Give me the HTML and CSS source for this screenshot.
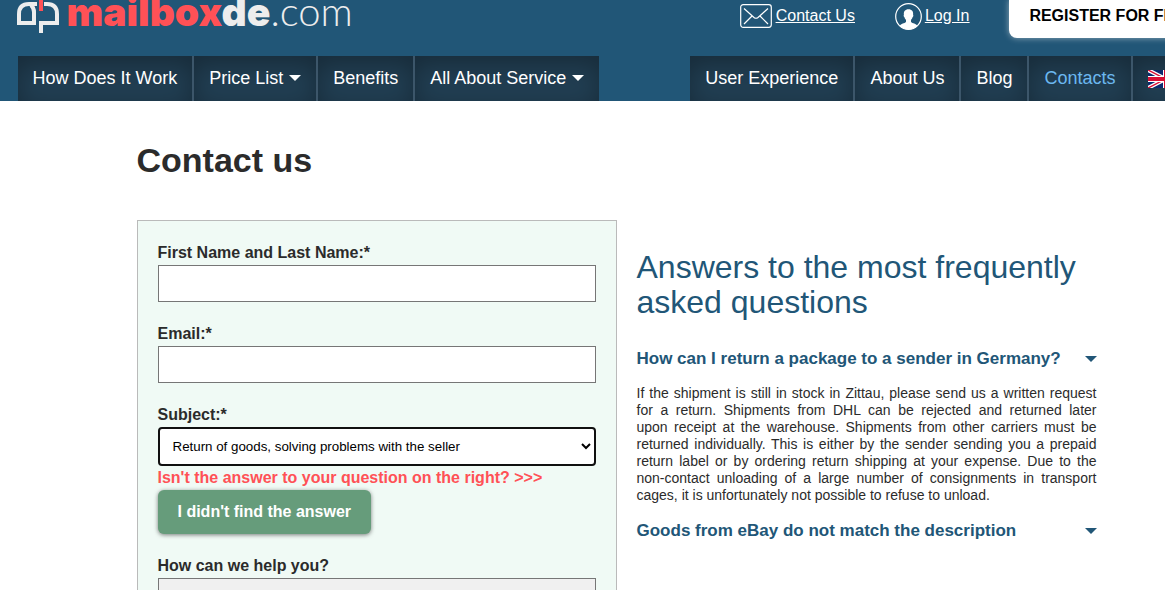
FILE: index.html
```html
<!DOCTYPE html>
<html lang="en">
<head>
<meta charset="utf-8">
<title>Contact us - mailboxde.com</title>
<link rel="stylesheet" href="styles.css">
</head>
<body>
<div class="page">
  <header class="header">
    <div class="wrap topbar">
      <a class="logo" href="#">
        <svg class="logo-mark" width="44" height="34" viewBox="0 0 44 34" aria-hidden="true">
          <g fill="none" stroke="#ededed" stroke-width="4">
            <path d="M21 4H13Q3 4 3 14V23H18V12Q18 8 15 5"/>
            <path d="M28 4H31Q41 4 41 14V23H25V33"/>
          </g>
          <path d="M23 0h4v11h-4z" fill="#ff5156"/>
        </svg>
        <span class="logo-text"><b class="logo-red">mailbox</b><b>de</b><span class="logo-thin">.com</span></span>
      </a>
      <a class="top-link" href="#">
        <svg width="32" height="24" viewBox="0 0 32 24" fill="none" stroke="#fff" aria-hidden="true">
          <rect x=".7" y=".7" width="30.600" height="22.600" rx="2.500" stroke-width="1.200"/>
          <path d="M4 4.500L14 13.500Q16 15 18 13.500L28 4.500M4 20L12 12M28 20L20 12" stroke-width="1.200"/>
        </svg>
        <span class="top-label">Contact Us</span>
      </a>
      <a class="top-link login" href="#">
        <svg width="27" height="27" viewBox="0 0 27 27" aria-hidden="true">
          <circle cx="13.500" cy="13.500" r="12.800" fill="none" stroke="#fff" stroke-width="1.200"/>
          <path d="M13.500 6.300C16.900 6.300 18.500 8.600 18.100 11.700C18.600 12 18.300 13.800 17.600 14.100C17.300 15.500 16.600 16.300 16 17V19C17.500 20.500 21 20.500 22.500 22.700Q18.500 26.500 13.500 26.500T4.500 22.700C6 20.500 9.500 20.500 11 19V17C10.400 16.300 9.700 15.500 9.400 14.100C8.700 13.800 8.400 12 8.900 11.700C8.500 8.600 10.100 6.300 13.500 6.300Z" fill="#fff"/>
        </svg>
        <span class="top-label">Log In</span>
      </a>
      <a class="register" href="#">REGISTER FOR FREE</a>
    </div>
    <nav class="wrap nav">
      <div class="nav-group">
        <a class="nav-item" href="#">How Does It Work</a>
        <a class="nav-item" href="#">Price List<i class="caret"></i></a>
        <a class="nav-item" href="#">Benefits</a>
        <a class="nav-item" href="#">All About Service<i class="caret"></i></a>
      </div>
      <div class="nav-group">
        <a class="nav-item" href="#">User Experience</a>
        <a class="nav-item" href="#">About Us</a>
        <a class="nav-item" href="#">Blog</a>
        <a class="nav-item active" href="#">Contacts</a>
        <a class="nav-item lang" href="#" aria-label="English">
          <svg width="35" height="18" viewBox="0 0 35 18" aria-hidden="true">
            <path fill="#0b2a6f" d="M0 0h35v18H0z"/>
            <path stroke="#fff" stroke-width="4" d="M0 0L35 18M35 0L0 18"/>
            <path stroke="#d80f35" stroke-width="1.500" d="M0 0L35 18M35 0L0 18"/>
            <path stroke="#fff" stroke-width="6" d="M18 0V18M0 9H35"/>
            <path stroke="#d80f35" stroke-width="4" d="M18 0V18M0 9H35"/>
          </svg><i class="caret"></i>
        </a>
      </div>
    </nav>
  </header>

  <main class="content">
    <h1>Contact us</h1>
    <div class="columns">
      <form class="form">
        <div class="field">
          <label for="name">First Name and Last Name:*</label>
          <input class="control" id="name" type="text">
        </div>
        <div class="field">
          <label for="email">Email:*</label>
          <input class="control" id="email" type="email">
        </div>
        <div class="field">
          <label for="subject">Subject:*</label>
          <select class="subject" id="subject">
            <option>Return of goods, solving problems with the seller</option>
          </select>
          <p class="hint">Isn't the answer to your question on the right? &gt;&gt;&gt;</p>
          <button class="button" type="button">I didn't find the answer</button>
        </div>
        <div class="field">
          <label for="message">How can we help you?</label>
          <textarea class="control message" id="message" disabled></textarea>
        </div>
      </form>
      <section class="faq">
        <h2>Answers to the most frequently asked questions</h2>
        <h3><span>How can I return a package to a sender in Germany?</span><i class="caret"></i></h3>
        <p>If the shipment is still in stock in Zittau, please send us a written request<br>
          for a return. Shipments from DHL can be rejected and returned later<br>
          upon receipt at the warehouse. Shipments from other carriers must be<br>
          returned individually. This is either by the sender sending you a prepaid<br>
          return label or by ordering return shipping at your expense. Due to the<br>
          non-contact unloading of a large number of consignments in transport
          <span class="last-line">cages, it is unfortunately not possible to refuse to unload.</span></p>
        <h3><span>Goods from eBay do not match the description</span><i class="caret"></i></h3>
      </section>
    </div>
  </main>
</div>
</body>
</html>
```
FILE: styles.css
```css
* { box-sizing: border-box; }

html { overflow: hidden; }

body {
  margin: 0;
  background: #fff;
  color: #2b2b2b;
  font: 16px/24px "Liberation Sans", Arial, sans-serif;
}

.page { min-width: 1233px; }

.wrap {
  max-width: 1198px;
  margin: 0 auto;
  display: flex;
}

.header { background: #215677; }

.topbar {
  height: 56px;
  align-items: flex-start;
  gap: 40px;
}

.logo {
  display: flex;
  gap: 7px;
  margin-right: auto;
  margin-left: -2px;
  color: #ededed;
  text-decoration: none;
}

.logo-text {
  font: 900 39px/22px Inter, sans-serif;
  white-space: nowrap;
}

.logo-text b { font-weight: 900; }
.logo-red { color: #ff5156; }
.logo-text .logo-thin { font: 300 40px/22px Lato, sans-serif; }

.top-link {
  display: flex;
  align-items: center;
  gap: 4px;
  height: 32px;
  color: #fff;
}

.top-link.login { gap: 3px; }
.top-label { text-decoration: underline; }

.register {
  padding: 4px 19px 10px 20px;
  border-radius: 0 0 8px 8px;
  background: #fff;
  box-shadow: 0 0 6px rgba(255, 255, 255, .5);
  color: #000;
  font-weight: bold;
  text-decoration: none;
  white-space: nowrap;
}

.nav { justify-content: space-between; }
.nav-group { display: flex; }

.nav-item {
  display: flex;
  align-items: center;
  gap: 6px;
  height: 45px;
  padding: 0 15px 1px;
  background: #213e52;
  box-shadow: inset 0 8px 24px rgba(0, 0, 0, .3);
  color: #fff;
  font-size: 18px;
  text-decoration: none;
  white-space: nowrap;
}

.nav-item + .nav-item { border-left: 2px solid #3c566a; }
.nav-item.active { color: #6cb8f0; }
.nav-item.lang { padding-bottom: 0; }

.caret {
  flex: none;
  border: 6px solid transparent;
  border-top-color: currentColor;
  border-bottom: 0;
}

.content {
  max-width: 960px;
  margin: 0 auto;
  padding-top: 40px;
}

h1 {
  margin: 0 0 40px;
  font-size: 34px;
  line-height: 39px;
}

.columns {
  display: grid;
  grid-template-columns: 480fr 460fr;
  gap: 20px;
}

.form {
  padding: 20px;
  border: 1px solid #bababa;
  background: #f0faf5;
}

.field { margin-bottom: 20px; }

label {
  display: block;
  font-weight: bold;
}

.control {
  display: block;
  width: 100%;
  height: 37px;
  padding: 8px 12px;
  border: 1px solid #767676;
  border-radius: 0;
  background: #fff;
}

.message {
  height: 160px;
  background: #f0f0f0;
}

.subject {
  display: block;
  width: 100%;
  height: 39px;
  padding: 0 0 0 9px;
  border: 2px solid #101010;
  border-radius: 4px;
  background: #fff;
  color: #000;
  font-family: "Liberation Sans", Arial, sans-serif;
}

.hint {
  margin: 0;
  color: #ff5156;
  font-weight: bold;
}

.button {
  display: block;
  padding: 10px 20px;
  border: 0;
  border-radius: 6px;
  background: #669c7b;
  box-shadow: 0 1px 4px rgba(0, 0, 0, .5);
  color: #fff;
  font: bold 16px/24px "Liberation Sans", Arial, sans-serif;
}

.faq { padding-top: 30px; }

h2 {
  margin: 0 0 29px;
  color: #215677;
  font-weight: normal;
  font-size: 32px;
  line-height: 35px;
}

h3 {
  display: flex;
  align-items: center;
  justify-content: space-between;
  margin: 0;
  color: #215677;
  font-size: 17px;
  line-height: 20px;
}

.faq p {
  margin: 16px 0 17px;
  font-size: 14px;
  line-height: 17px;
  text-align: justify;
  text-align-last: justify;
}

.last-line {
  display: block;
  text-align-last: left;
}
```
